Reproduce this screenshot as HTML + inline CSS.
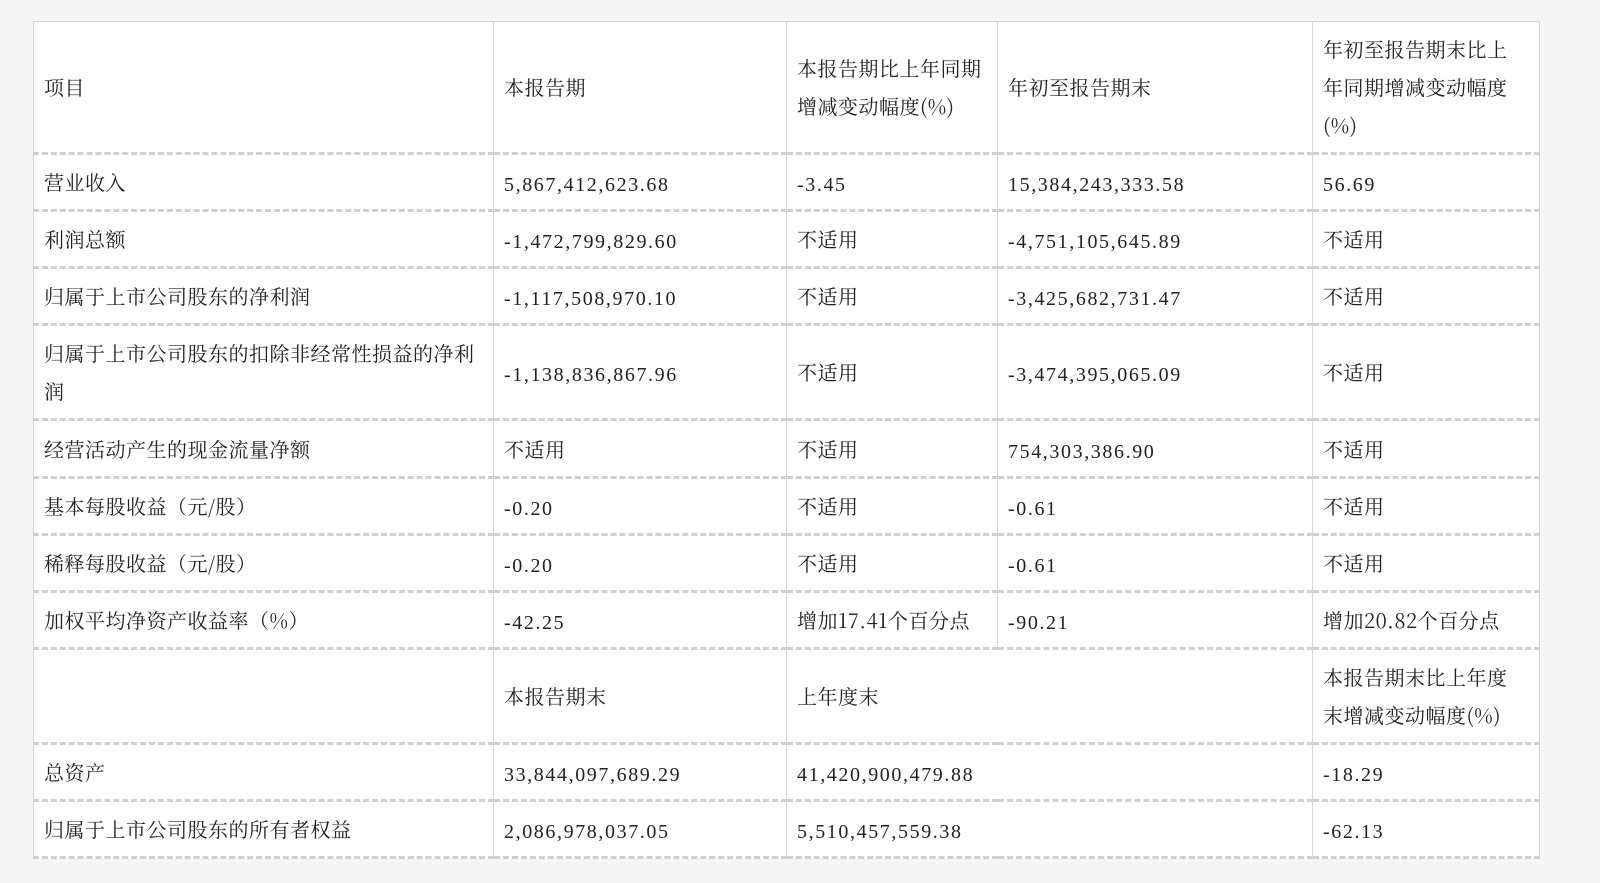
<!DOCTYPE html>
<html><head><meta charset="utf-8"><style>
body{margin:0;background:#f5f5f5;width:1600px;height:883px;overflow:hidden;font-family:"Noto Serif CJK SC","Liberation Serif",serif;color:#222;}
table{position:absolute;left:33px;top:21px;border-collapse:collapse;background:#fff;table-layout:fixed;width:1506px;}
td{border-left:1px solid #d4d4d4;border-right:1px solid #d4d4d4;border-top:3px dashed #d0d0d0;border-bottom:3px dashed #d0d0d0;padding:0 14px 0 10px;font-size:20px;line-height:38px;vertical-align:middle;letter-spacing:0.5px;overflow:hidden;}
tr:first-child td{border-top:1px solid #d4d4d4;}
.n{font-family:"Liberation Serif","Noto Serif CJK SC",serif;letter-spacing:1.6px;font-size:20px;}
.n span{position:relative;top:3px;}
</style></head><body>
<table>
<colgroup><col style="width:460px"><col style="width:293px"><col style="width:211px"><col style="width:315px"><col style="width:227px"></colgroup>
<tr style="height:132px"><td>项目</td><td>本报告期</td><td>本报告期比上年同期增减变动幅度(%)</td><td>年初至报告期末</td><td>年初至报告期末比上年同期增减变动幅度(%)</td></tr>
<tr style="height:57px"><td>营业收入</td><td class="n"><span>5,867,412,623.68</span></td><td class="n"><span>-3.45</span></td><td class="n"><span>15,384,243,333.58</span></td><td class="n"><span>56.69</span></td></tr>
<tr style="height:57px"><td>利润总额</td><td class="n"><span>-1,472,799,829.60</span></td><td>不适用</td><td class="n"><span>-4,751,105,645.89</span></td><td>不适用</td></tr>
<tr style="height:57px"><td>归属于上市公司股东的净利润</td><td class="n"><span>-1,117,508,970.10</span></td><td>不适用</td><td class="n"><span>-3,425,682,731.47</span></td><td>不适用</td></tr>
<tr style="height:95px"><td>归属于上市公司股东的扣除非经常性损益的净利润</td><td class="n"><span>-1,138,836,867.96</span></td><td>不适用</td><td class="n"><span>-3,474,395,065.09</span></td><td>不适用</td></tr>
<tr style="height:58px"><td>经营活动产生的现金流量净额</td><td>不适用</td><td>不适用</td><td class="n"><span>754,303,386.90</span></td><td>不适用</td></tr>
<tr style="height:57px"><td>基本每股收益（元/股）</td><td class="n"><span>-0.20</span></td><td>不适用</td><td class="n"><span>-0.61</span></td><td>不适用</td></tr>
<tr style="height:57px"><td>稀释每股收益（元/股）</td><td class="n"><span>-0.20</span></td><td>不适用</td><td class="n"><span>-0.61</span></td><td>不适用</td></tr>
<tr style="height:57px"><td>加权平均净资产收益率（%）</td><td class="n"><span>-42.25</span></td><td>增加17.41个百分点</td><td class="n"><span>-90.21</span></td><td>增加20.82个百分点</td></tr>
<tr style="height:95px"><td></td><td>本报告期末</td><td colspan="2">上年度末</td><td>本报告期末比上年度末增减变动幅度(%)</td></tr>
<tr style="height:57px"><td>总资产</td><td class="n"><span>33,844,097,689.29</span></td><td colspan="2" class="n"><span>41,420,900,479.88</span></td><td class="n"><span>-18.29</span></td></tr>
<tr style="height:57px"><td>归属于上市公司股东的所有者权益</td><td class="n"><span>2,086,978,037.05</span></td><td colspan="2" class="n"><span>5,510,457,559.38</span></td><td class="n"><span>-62.13</span></td></tr>
</table>
</body></html>
